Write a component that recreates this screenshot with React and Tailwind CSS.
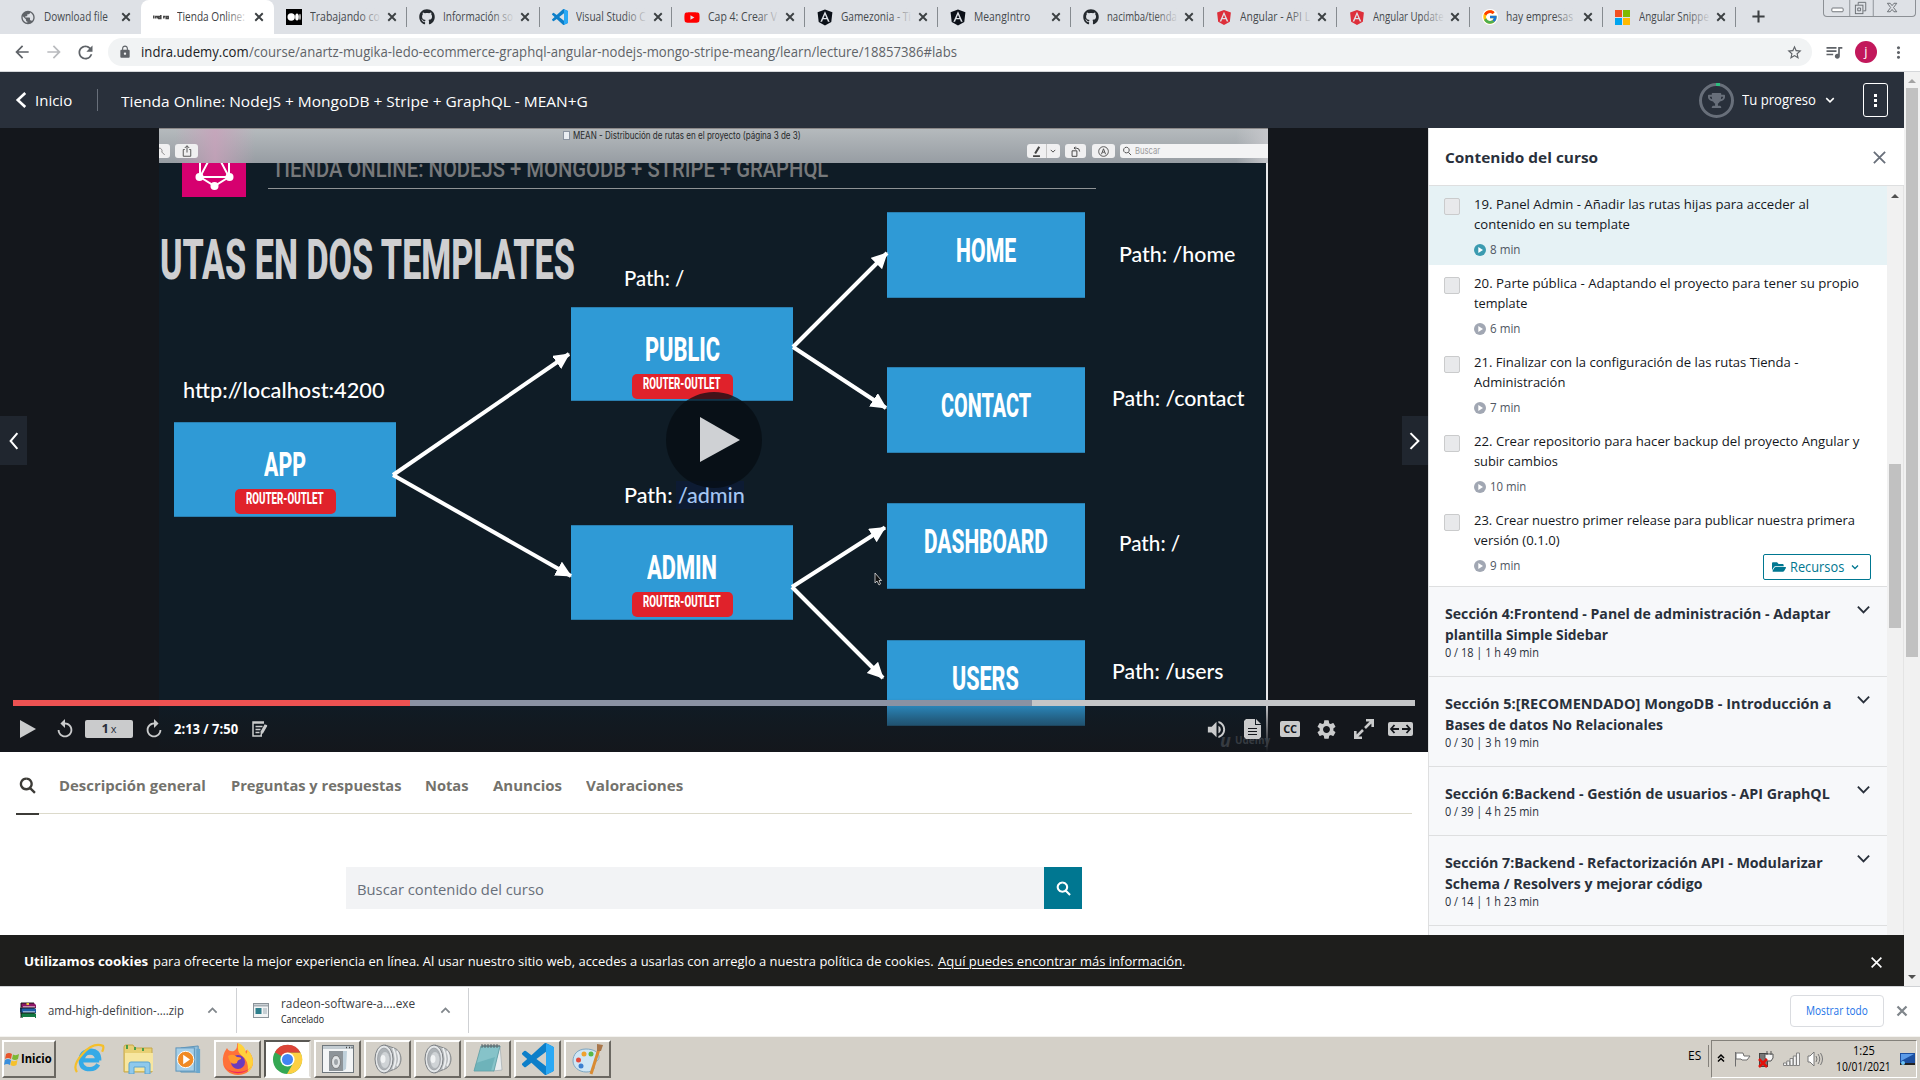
import React, { useLayoutEffect, useRef, useState } from "react";
import { FaGithub, FaYoutube, FaAngular, FaTrophy, FaFolderOpen } from "react-icons/fa";
import { FcGoogle } from "react-icons/fc";
import {
  MdArrowBack, MdArrowForward, MdRefresh, MdLock, MdStarBorder, MdQueueMusic, MdMoreVert,
  MdReplay, MdVolumeUp, MdSettings, MdPublic,
} from "react-icons/md";

/* Single line of text squeezed or stretched to a given width. */
function Fit({ w, children, className = "", inner = "" }) {
  const ref = useRef(null);
  const [s, setS] = useState(1);
  useLayoutEffect(() => {
    const n = ref.current.offsetWidth;
    if (n) setS(w / n);
  }, [w]);
  return (
    <span className={"inline-block whitespace-nowrap shrink-0 " + className} style={{ width: w }}>
      <span ref={ref} className={"inline-block origin-left " + inner} style={{ transform: `scaleX(${s})` }}>
        {children}
      </span>
    </span>
  );
}

const Chevron = ({ className = "", d = "M2 5l6 6 6-6", sw = 2 }) => (
  <svg viewBox="0 0 16 16" className={"shrink-0 " + className} fill="none" stroke="currentColor" strokeWidth={sw}>
    <path d={d} />
  </svg>
);
const Cross = ({ className = "", sw = 2 }) => <Chevron className={className} sw={sw} d="M2 2l12 12M14 2L2 14" />;

const VsCode = ({ className }) => (
  <svg viewBox="0 0 24 24" className={className} fill="#0d7fc9">
    <path d="M23.15 2.587L18.21.21a1.494 1.494 0 0 0-1.705.29l-9.46 8.63-4.12-3.128a.999.999 0 0 0-1.276.057L.327 7.261A1 1 0 0 0 .326 8.74L3.899 12 .326 15.26a1 1 0 0 0 .001 1.479L1.65 17.94a.999.999 0 0 0 1.276.057l4.12-3.128 9.46 8.63a1.492 1.492 0 0 0 1.704.29l4.942-2.377A1.5 1.5 0 0 0 24 20.06V3.939a1.5 1.5 0 0 0-.85-1.352zm-5.146 14.861L10.826 12l7.178-5.448v10.896z" />
    <path fill="#2ba9f5" d="M18 .2l5.150 2.387q.85.5.85 1.352v16.121q0 .9-.85 1.352L18 23.800z" />
  </svg>
);
const Medium = () => (
  <svg viewBox="0 0 16 16" className="size-4">
    <rect width="16" height="16" fill="#000" />
    <circle cx="5.2" cy="8" r="3.7" fill="#fff" />
    <ellipse cx="11" cy="8" rx="1.8" ry="3.5" fill="#fff" />
    <ellipse cx="14" cy="8" rx=".7" ry="3.2" fill="#fff" />
  </svg>
);
const Microsoft = () => (
  <div className="grid grid-cols-2 gap-px size-[15px]">
    <i className="bg-[#f25022]" /><i className="bg-[#7fba00]" /><i className="bg-[#00a4ef]" /><i className="bg-[#ffb900]" />
  </div>
);
const Indra = () => (
  <svg viewBox="0 0 16 16" className="size-4" fill="none" stroke="#444" strokeWidth="1.500">
    <path d="M.8 6.500v3M2.800 9.500v-2h2v2M7.800 7v2.500h-2v-2h2M10.800 9.500v-2h1.400M13.200 7.500h2v2h-2zM7.800 6v1.500" />
  </svg>
);
const Black = () => <FaAngular className="size-[19px] text-[#0b1018]" />;
const Red = () => <FaAngular className="size-[17px] text-[#dd2f3a]" />;

const TABS = [
  ["Download file", 64, <MdPublic className="size-[17px] text-[#5f6368]" />],
  ["Tienda Online:", 68, <Indra />],
  ["Trabajando co", 70, <Medium />],
  ["Información so", 70, <FaGithub className="size-4 text-[#24292e]" />],
  ["Visual Studio C", 70, <VsCode className="size-4" />],
  ["Cap 4: Crear V", 69, <FaYoutube className="size-[17px] text-[#ff0000]" />],
  ["Gamezonia - Ti", 70, <Black />],
  ["MeangIntro", 56, <Black />],
  ["nacimba/tienda", 70, <FaGithub className="size-4 text-[#24292e]" />],
  ["Angular - API L", 70, <Red />],
  ["Angular Update", 71, <Red />],
  ["hay empresas", 67, <FcGoogle className="size-4 rounded-full bg-white" />],
  ["Angular Snippe", 70, <Microsoft />],
];

function TabStrip() {
  return (
    <div className="flex h-[34px] shrink-0 bg-[#dee1e6] pl-[8px]">
      {TABS.map(([t, w, icon], i) => (
        <div
          key={t}
          className={
            "flex items-center h-[34px] w-[132.9px] shrink-0 pl-[12px] text-[12px] relative " +
            (i === 1 ? "bg-white rounded-t-lg text-[#3c4043]" : "text-[#45494d]")
          }
        >
          <span className="w-4 flex justify-center">{icon}</span>
          <span className="relative ml-2 w-[72px] flex overflow-hidden">
            <Fit w={w}>{t}</Fit>
            {w > 66 && (
              <span className={"absolute right-0 top-0 h-full w-6 bg-gradient-to-r from-transparent " + (i === 1 ? "to-white" : "to-[#dee1e6]")} />
            )}
          </span>
          <Cross className="size-[10px] ml-[5px] text-[#3c4043]" sw={3} />
          {i > 1 && <span className="absolute right-0 top-[7px] h-5 w-px bg-[#868b90]" />}
        </div>
      ))}
      <Chevron className="size-[15px] ml-[15px] mt-[9px] text-[#3c4043]" d="M8 1.500v13M1.500 8h13" sw={2.2} />
      <div className="ml-auto mr-[4px] flex h-[17px] w-[93px] rounded-b border border-t-0 border-[#8c9095] text-[#6a6e73]">
        <svg viewBox="0 0 93 17" className="w-full" fill="none" stroke="currentColor">
          <path d="M25.500 0v17M50.500 0v17" stroke="#8c9095" />
          <rect x="6.500" y="8.500" width="12" height="4" rx="1" fill="#fff" />
          <rect x="31.500" y="5.500" width="8" height="9" /><path d="M34.500 5V2.500h8v9H40M34 8.500h3v3h-3z" />
          <path d="M65.500 3.500h3l2 2.500 2-2.500h3L72 8l3.500 4.500h-3l-2-2.500-2 2.500h-3L69 8z" />
        </svg>
      </div>
    </div>
  );
}

function AddressBar() {
  return (
    <div className="flex items-center h-[38px] shrink-0 bg-white border-b border-[#d5d7da] text-[#5f6368] pb-px">
      <MdArrowBack className="size-5 ml-3" />
      <MdArrowForward className="size-5 ml-3 text-[#b9bbbe]" />
      <MdRefresh className="size-[21px] ml-[11px]" />
      <div className="ml-[12px] w-[1704px] h-7 rounded-full bg-[#f1f3f4] flex items-center pl-[10px] text-[14px]">
        <MdLock className="size-[14px] -mt-px" />
        <Fit w={108} className="ml-[9px] text-[#202124] leading-5">indra.udemy.com</Fit>
        <Fit w={708} className="leading-5">/course/anartz-mugika-ledo-ecommerce-graphql-angular-nodejs-mongo-stripe-meang/learn/lecture/18857386#labs</Fit>
        <MdStarBorder className="size-[17px] ml-auto mr-[9px]" />
      </div>
      <MdQueueMusic className="size-[20px] ml-[12px]" />
      <span className="ml-[11px] size-[22px] rounded-full bg-[#c2185b] text-white text-[13px] leading-[20px] text-center">j</span>
      <MdMoreVert className="size-[19px] ml-[12px]" />
    </div>
  );
}

function CourseHeader() {
  return (
    <div className="flex items-center h-14 shrink-0 bg-[#29303b] text-white">
      <Chevron className="h-[18px] w-[15px] ml-[14px]" d="M12 0.500L4 8l8 7.500" sw={2.8} />
      <Fit w={37} className="ml-[6px] text-[15px] leading-5">Inicio</Fit>
      <span className="ml-[25px] w-px h-[22px] bg-[#686f7a]" />
      <Fit w={467} className="ml-[23px] text-[15px] leading-5 mt-[2px]">Tienda Online: NodeJS + MongoDB + Stripe + GraphQL - MEAN+G</Fit>
      <div className="ml-auto size-[35px] rounded-full border-[3px] border-[#686f7a] flex items-center justify-center relative">
        <span className="absolute -top-[3px] left-[14px] w-[4px] h-[3px] bg-[#2dbd7e]" />
        <FaTrophy className="size-[17px] text-[#686f7a]" />
      </div>
      <Fit w={74} className="ml-[8px] text-[14px] leading-5">Tu progreso</Fit>
      <Chevron className="size-[10px] ml-[9px]" sw={2.4} />
      <div className="ml-[28px] mr-[16px] h-[34px] w-[25px] rounded-[3px] border border-white flex flex-col items-center justify-center gap-[2px]">
        <i className="size-[3px] bg-white" /><i className="size-[3px] bg-white" /><i className="size-[3px] bg-white" />
      </div>
    </div>
  );
}

const NODES = [
  ["APP", 42, "left-[174px] top-[294px] w-[222px] h-[95px] pt-[24px]", true],
  ["PUBLIC", 75, "left-[571px] top-[179px] w-[222px] h-[94px] pt-[24px]", true],
  ["ADMIN", 70, "left-[571px] top-[397px] w-[222px] h-[94.500px] pt-[24px]", true],
  ["HOME", 60, "left-[886.500px] top-[83.500px] w-[198.500px] h-[86px] pt-[20px]", false],
  ["CONTACT", 90, "left-[886.500px] top-[239px] w-[198.500px] h-[86px] pt-[20px]", false],
  ["DASHBOARD", 124, "left-[886.500px] top-[375px] w-[198.500px] h-[86px] pt-[20px]", false],
  ["USERS", 67, "left-[886.500px] top-[511.500px] w-[198.500px] h-[86px] pt-[20px]", false],
];
const PATHS = [
  ["http://localhost:4200", 202, "left-[183px] top-[251px]"],
  ["Path: /", 60, "left-[624px] top-[139px]"],
  ["Path: /home", 116, "left-[1119px] top-[115px]"],
  ["Path: /contact", 132, "left-[1112px] top-[259px]"],
  ["Path: /", 61, "left-[1119px] top-[404px]"],
  ["Path: /users", 111, "left-[1112px] top-[532px]"],
];
const ARROWS = [
  [393, 475, 569, 354], [393, 475, 571, 576], [793, 347, 887, 253],
  [793, 347, 886, 408], [792, 587, 885, 527.5], [792, 587, 883, 678],
];

function Slide() {
  return (
    <div className="absolute inset-0">
      <div className="absolute left-[159px] top-0 w-[1109px] h-[624px] bg-[#0f1c26] border-r-2 border-[#e8e8ea]" />
      <svg viewBox="182 163 64 34" className="absolute left-[182px] top-[35px] w-16 h-[34px]" fill="none" stroke="#fff" strokeWidth="2">
        <rect x="182" y="163" width="64" height="34" fill="#d6006f" stroke="none" />
        <path d="M200 163v14l14.500 9 14.500-9v-14M209 160l-9 17M220 160l9 17M200 177h29" />
        <g fill="#fff" stroke="none"><circle cx="199.500" cy="177" r="4" /><circle cx="229.500" cy="177" r="4" /><circle cx="214.500" cy="186" r="4" /></g>
      </svg>
      <div className="absolute left-[272px] top-[29px] text-[24px] leading-none text-[#77797b] font-['Roboto'] font-medium">
        <Fit w={556}>TIENDA ONLINE: NODEJS + MONGODB + STRIPE + GRAPHQL</Fit>
      </div>
      <div className="absolute left-[268px] top-[60px] w-[828px] h-px bg-[#8f9395]" />
      <div className="absolute left-[159px] top-0 w-[1109px] h-[35px] bg-linear-to-b from-[#b5babd] to-[#979da3] border-t border-[#8b8888]">
        <div className="absolute left-[16px] top-0 h-full w-[80px] bg-linear-to-r from-transparent via-[#cba0bb]/75 to-transparent" />
        <div className="absolute right-0 top-0 h-full w-8 bg-linear-to-r from-transparent to-[#c5c6ca]" />
        <div className="absolute left-0 top-[15px] w-[11px] h-[14px] bg-[#f0f0f1] rounded-r-[3px] text-[#777]"><Chevron className="size-[9px] mt-[3px]" d="M0 2a5 5 0 0 1 5 7l5 5" sw={1.5} /></div>
        <div className="absolute left-[16px] top-[15px] w-[23px] h-[14px] bg-[#f0f0f1] rounded-[3px] flex items-center justify-center text-[#555]">
          <Chevron className="size-[12px]" d="M5 6H3v9h10V6h-2M8 10V1M5 4l3-3 3 3" sw={1.300} />
        </div>
        <div className="absolute left-[404px] top-0 flex items-center font-['Inter'] text-[10px] leading-[13px] text-[#26282a]">
          <span className="w-[7px] h-[9px] bg-[#e9edf2] border border-[#8a93a0] mr-[3px]" />
          <Fit w={228}>MEAN - Distribución de rutas en el proyecto (página 3 de 3)</Fit>
        </div>
        <div className="absolute right-0 top-[15px] h-[14px] flex text-[#444] text-[9px]">
          <div className="w-[33px] bg-[#f0f0f1] rounded-[3px] flex items-center">
            <Chevron className="size-[11px] ml-[4px]" d="M12 1L6 11M3 15h10" sw={3} />
            <span className="ml-[4px] h-full w-px bg-[#c5c5c5]" /><Chevron className="size-[6px] ml-[3px]" sw={2.500} />
          </div>
          <div className="ml-[5px] w-[21px] bg-[#f0f0f1] rounded-[3px] flex items-center justify-center"><Chevron className="size-[11px]" d="M3 7h7v8H3zM6 3h3a5 5 0 0 1 5 5M8 1L6 3l2 2" sw={1.400} /></div>
          <div className="ml-[6px] w-[23px] bg-[#f0f0f1] rounded-[3px] flex items-center justify-center"><Chevron className="size-[11px]" d="M8 1a7 7 0 1 0 .1 0M5 12l3-8 3 8M6.500 9h3" sw={1.300} /></div>
          <div className="ml-[5px] w-[148px] bg-[#f3f3f4] rounded-l-[3px] flex items-center pl-[2px] font-['Inter'] text-[9.500px] text-[#9a9a9c]">
            <Chevron className="size-[10px] text-[#555] mr-[3px]" d="M7 2a4.500 4.500 0 1 0 .1 0M10 10l4.500 4.500" sw={1.600} />
            <Fit w={25}>Buscar</Fit>
          </div>
        </div>
      </div>
      <div className="absolute left-[160px] top-[105px] font-['Roboto'] font-extrabold text-[55px] leading-none text-[#cfcfd1]">
        <Fit w={415}>UTAS EN DOS TEMPLATES</Fit>
      </div>
      {NODES.map(([t, w, pos, outlet]) => (
        <div key={t} className={"absolute bg-[#2f9ad6] border-y border-[#2a7fb0] flex flex-col items-center font-['Roboto'] font-extrabold text-white text-[34px] leading-[34px] " + pos}>
          <Fit w={w}>{t}</Fit>
          {outlet && (
            <div className="mt-[8px] w-[101px] h-[25px] rounded-[5px] bg-[#e0222b] text-center text-[16px] leading-4 pt-[2px]">
              <Fit w={78}>ROUTER-OUTLET</Fit>
            </div>
          )}
        </div>
      ))}
      {PATHS.map(([t, w, pos]) => (
        <div key={pos} className={"absolute font-['Lato'] font-medium text-[21px] leading-none text-white " + pos}><Fit w={w}>{t}</Fit></div>
      ))}
      <div className="absolute left-[676px] top-[353px] w-[68px] h-[28px] bg-[#0d1b33]" />
      <div className="absolute left-[624px] top-[356px] font-['Lato'] font-medium text-[21px] leading-none text-white">
        <Fit w={121}>Path: <span className="text-[#a4c6f2]">/admin</span></Fit>
      </div>
      <svg viewBox="0 128 1429 624" className="absolute inset-0 w-[1429px] h-[624px]">
        <defs>
          <marker id="head" markerWidth="18" markerHeight="18" refX="15" refY="8" orient="auto" markerUnits="userSpaceOnUse">
            <path d="M0 0l16 8-16 8z" fill="#fff" />
          </marker>
        </defs>
        {ARROWS.map((a, i) => (
          <line key={i} x1={a[0]} y1={a[1]} x2={a[2]} y2={a[3]} stroke="#fff" strokeWidth="4" markerEnd="url(#head)" />
        ))}
        <path d="M875 573v10l2-2 2 4 1.500-1-1.500-3.500h2.500z" fill="#111" stroke="#ddd" strokeWidth=".8" />
        <circle cx="714" cy="440" r="48" fill="#060d12" fillOpacity=".72" />
        <path d="M700 417l40 23-40 22z" fill="#cfd1d4" />
      </svg>
    </div>
  );
}

function Controls() {
  return (
    <div className="absolute inset-x-0 bottom-0 h-[70px]">
      <div className="absolute inset-x-0 bottom-0 h-[54px] bg-linear-to-b from-transparent via-[#14171c]/45 via-40% to-[#14171c]" />
      <div className="absolute left-[1220px] bottom-[6px] flex items-center gap-[4px] text-[#363b41] font-bold text-[10px] leading-3"><i className="text-[18px]">u</i>Udemy</div>
      <div className="relative mx-[13px] pt-[18px] flex h-[24px]">
        <i className="w-[397px] bg-[#ec5252]" /><i className="w-[622px] bg-[#8a92a3]" /><i className="flex-1 bg-[#c4c5c7]" />
      </div>
      <div className="relative flex items-center h-[46px] text-[#cacbcc]">
        <svg viewBox="0 0 16 18" className="w-4 h-[18px] ml-5" fill="currentColor"><path d="M0 0l16 9-16 9z" /></svg>
        <MdReplay className="size-[22px] ml-[18px]" />
        <div className="ml-[9px] w-12 h-[18px] rounded-[2px] bg-[#cacbcc] text-[#29303b] text-center text-[13px] leading-[17px]"><b>1</b><span className="text-[11px] ml-[2px]">x</span></div>
        <MdReplay className="size-[22px] ml-[10px] -scale-x-100" />
        <Fit w={64} className="ml-[9px] text-[14px] font-bold text-white leading-5">2:13 / 7:50</Fit>
        <svg viewBox="0 0 16 16" className="size-[16px] ml-[14px]" fill="none" stroke="currentColor" strokeWidth="1.500">
          <path d="M12 1H1v14h9M1 2h11M3.500 5.500h7M3.500 8.500h5M3.500 11.500h4M14.500 4l-5 8-.5 3" /><path d="M14 4l-4.500 8" strokeWidth="3" />
        </svg>
        <MdVolumeUp className="size-[23px] ml-auto" />
        <svg viewBox="0 0 17 20" className="w-[17px] h-5 ml-[16px]"><path d="M2 0h9v6h6v12l-2 2H2l-2-2V2zM12 0l5 5h-5z" fill="currentColor" /><path d="M4 9.500h9M4 12.500h9M4 15.500h9" stroke="#14171c" /></svg>
        <div className="ml-[19px] w-5 h-4 rounded-[2px] bg-current"><span className="block text-center text-[11px] leading-4 font-bold text-[#14171c] tracking-tight">CC</span></div>
        <MdSettings className="size-[23px] ml-[15px]" />
        <svg viewBox="0 0 20 20" className="size-5 ml-[16px]" fill="none" stroke="currentColor" strokeWidth="2.600"><path d="M11 9l7-7M12 1.300h6.700V8M9 11l-7 7M8 18.700H1.300V12" /></svg>
        <svg viewBox="0 0 25 14" className="w-[25px] h-[14px] ml-[14px] mr-[15px]"><rect width="25" height="14" rx="2" fill="currentColor" /><path d="M11 7H3M6.500 3L3 7l3.500 4M14 7h8M18.500 3L22 7l-3.500 4" fill="none" stroke="#14171c" strokeWidth="1.800" /></svg>
      </div>
    </div>
  );
}

const LECTURES = [
  [["19. Panel Admin - Añadir las rutas hijas para acceder al", 335], ["contenido en su template", 156], "8 min", 30],
  [["20. Parte pública - Adaptando el proyecto para tener su propio", 385], ["template", 53], "6 min", 30],
  [["21. Finalizar con la configuración de las rutas Tienda -", 325], ["Administración", 91], "7 min", 30],
  [["22. Crear repositorio para hacer backup del proyecto Angular y", 385], ["subir cambios", 84], "10 min", 36],
  [["23. Crear nuestro primer release para publicar nuestra primera", 381], ["versión (0.1.0)", 86], "9 min", 30],
];
const SECTIONS = [
  [[["Sección 4:Frontend - Panel de administración - Adaptar", 385], ["plantilla Simple Sidebar", 163]], "0 / 18 | 1 h 49 min"],
  [[["Sección 5:[RECOMENDADO] MongoDB - Introducción a", 387], ["Bases de datos No Relacionales", 218]], "0 / 30 | 3 h 19 min"],
  [[["Sección 6:Backend - Gestión de usuarios - API GraphQL", 385]], "0 / 39 | 4 h 25 min"],
  [[["Sección 7:Backend - Refactorización API - Modularizar", 378], ["Schema / Resolvers y mejorar código", 257]], "0 / 14 | 1 h 23 min"],
  [[], ""],
];

function Sidebar() {
  return (
    <div className="w-[476px] shrink-0 flex flex-col border-l border-[#dedfe0] bg-white">
      <div className="h-[58px] shrink-0 flex items-center border-b border-[#dedfe0] pl-[16px] pr-[17px] pt-[2px] text-[#29303b]">
        <Fit w={153} className="text-[15px] font-bold">Contenido del curso</Fit>
        <Cross className="size-[15px] ml-auto text-[#686f7a]" sw={1.900} />
      </div>
      <div className="flex flex-1 min-h-0">
        <div className="w-[458px] flex flex-col overflow-hidden">
          {LECTURES.map(([a, b, m, mw], i) => (
            <div key={i} className={"h-[79px] shrink-0 flex pl-[15px] pt-[8px] relative " + (i === 0 ? "bg-[#e6f2f5]" : "bg-white")}>
              <span className="mt-[4px] w-4 h-[17px] rounded-[2px] border border-[#cacbcc] bg-[#e8e9eb]" />
              <div className="ml-[14px] flex flex-col text-[13px] leading-5 text-[#14171c]">
                <Fit w={a[1]}>{a[0]}</Fit>
                <Fit w={b[1]}>{b[0]}</Fit>
                <div className="flex items-center mt-[6px] h-5 text-[12px] text-[#505763]">
                  <svg viewBox="0 0 12 12" className="size-3 mr-1"><circle cx="6" cy="6" r="6" fill={i === 0 ? "#3b9bb0" : "#a1a7b3"} /><path d="M4.300 3l4.700 3-4.700 3z" fill="#fff" /></svg>
                  <Fit w={mw}>{m}</Fit>
                </div>
              </div>
              {i === 4 && (
                <div className="absolute right-[16px] top-[52px] w-[108px] h-[26px] rounded-[2px] border border-[#007791] bg-white flex items-center pl-[8px] text-[#007791]">
                  <FaFolderOpen className="size-[14px]" />
                  <Fit w={54} className="ml-[4px] text-[14px] leading-5">Recursos</Fit>
                  <Chevron className="size-[8px] ml-[7px]" sw={2.600} />
                </div>
              )}
            </div>
          ))}
          <div className="h-[5px] shrink-0" />
          {SECTIONS.map(([ls, m], i) => (
            <div key={i} className={"shrink-0 flex border-t border-[#dedfe0] bg-[#f7f8fa] pl-[16px] pt-[16px] pr-[16px] text-[#29303b] " + (ls.length === 1 ? "h-[69px]" : "h-[90px]")}>
              <div className="flex flex-col text-[15px] font-bold leading-[21px]">
                {ls.map(([t, w]) => <Fit key={t} w={w}>{t}</Fit>)}
                {m && <Fit w={94} className="text-[12px] leading-[16px] font-normal">{m}</Fit>}
              </div>
              {m && <Chevron className="size-[15px] ml-auto -mt-[1px]" sw={2} />}
            </div>
          ))}
        </div>
        <div className="flex-1 bg-[#f1f1f1] flex flex-col items-center border-r border-[#e4e4e4]">
          <svg viewBox="0 0 8 4" className="w-2 h-1 mt-[8px]"><path d="M4 0l4 4H0z" fill="#505050" /></svg>
          <div className="mt-[266px] w-[12px] h-[164px] bg-[#c1c1c1]" />
        </div>
      </div>
    </div>
  );
}

const NAV = [["Descripción general", 147, ""], ["Preguntas y respuestas", 170, "ml-[25px]"], ["Notas", 44, "ml-[24px]"], ["Anuncios", 69, "ml-[24px]"], ["Valoraciones", 97, "ml-[24px]"]];
const SearchIcon = ({ className }) => <Chevron className={className} d="M6.800 1.500a5 5 0 1 0 .1 0M10.500 10.500l4.500 4.500" sw={2.200} />;

function Main() {
  return (
    <div className="w-[1428px] shrink-0 flex flex-col">
      <div className="h-[624px] shrink-0 relative overflow-hidden bg-[#14171c]">
        <Slide />
        <Controls />
        <div className="absolute left-0 top-[288px] w-[27px] h-[49px] bg-[#20262f] text-white flex items-center justify-center"><Chevron className="size-[18px]" d="M11 1L5 8l6 7" sw={1.800} /></div>
        <div className="absolute right-0 top-[288px] w-[26px] h-[49px] bg-[#20262f] text-white flex items-center justify-center"><Chevron className="size-[18px]" d="M4 1l7 7-7 7" sw={1.800} /></div>
      </div>
      <div className="ml-4 mr-[16px] h-[62px] shrink-0 flex border-b border-[#dcdacb]">
        <div className="w-[23px] h-[63px] border-b-2 border-[#3c3b37] pt-[25px] pl-[3px] text-[#3c3b37]"><SearchIcon className="size-[17px]" /></div>
        <div className="flex items-center h-[66px] ml-5 text-[15px] font-bold text-[#73726c]">
          {NAV.map(([t, w, c]) => <Fit key={t} w={w} className={c}>{t}</Fit>)}
        </div>
      </div>
      <div className="ml-[346px] mt-[53px] flex h-[42px]">
        <div className="w-[698px] bg-[#f2f3f5] flex items-center pl-[11px] pt-[3px] text-[15px] text-[#686f7a]"><Fit w={187}>Buscar contenido del curso</Fit></div>
        <div className="w-[38px] bg-[#007791] text-white flex items-center justify-center"><SearchIcon className="size-[15px]" /></div>
      </div>
    </div>
  );
}

function CookieBar() {
  return (
    <div className="h-[51px] shrink-0 bg-[#1e1e1c] flex items-center pl-6 pr-[21px] text-white text-[13px] leading-5">
      <Fit w={124} className="font-bold">Utilizamos cookies</Fit>
      <Fit w={781} className="ml-[5px]">para ofrecerte la mejor experiencia en línea. Al usar nuestro sitio web, accedes a usarlas con arreglo a nuestra política de cookies.</Fit>
      <Fit w={244} className="ml-[4px]" inner="underline underline-offset-2">Aquí puedes encontrar más información</Fit>.
      <Cross className="size-[13px] ml-auto mt-[3px]" sw={2} />
    </div>
  );
}

function Downloads() {
  const up = "M2 11l6-6 6 6";
  return (
    <div className="h-[50px] shrink-0 bg-white border-t border-[#d0d2d5] flex items-center pb-[2px] text-[13px] text-[#3c4043]">
      <svg viewBox="0 0 17 17" className="size-[17px] ml-[20px]">
        <path d="M1 1h13l2 2v3H3L1 5z" fill="#8d1766" /><path d="M0 6h14l2 1v4H2l-2-1z" fill="#1d5fa8" /><path d="M1 11h13l2 1v4H3l-2-1z" fill="#137a42" />
        <path d="M3 5h12M3 10h12M3 15.500h12" stroke="#fff" strokeWidth="1" /><path d="M1 1v15M.5 6h15M.5 11h15M1 1h13" stroke="#111" strokeWidth=".9" /><path d="M6.500 1h2.500v2H6.500z" fill="#e8c53a" />
      </svg>
      <Fit w={136} className="ml-[11px]">amd-high-definition-....zip</Fit>
      <Chevron className="size-[11px] ml-[23px] text-[#80868b]" d={up} sw={2.600} />
      <span className="w-px h-[45px] bg-[#cfd1d4] ml-[18px]" />
      <svg viewBox="0 0 16 15" className="w-4 h-[15px] ml-[16px]"><rect x=".5" y=".5" width="15" height="14" fill="#f2f4f5" stroke="#8b9399" /><path d="M1 2.500h14" stroke="#a7afb5" strokeWidth="2" /><rect x="2.500" y="5" width="6" height="6" fill="#2e7f8c" /><path d="M10 6h4M10 8h4M10 10h4" stroke="#9cabb4" /></svg>
      <div className="flex flex-col ml-[12px]">
        <Fit w={134} className="leading-[17px]">radeon-software-a....exe</Fit>
        <Fit w={43} className="text-[10.500px] leading-[15px] text-[#202124]">Cancelado</Fit>
      </div>
      <Chevron className="size-[11px] ml-[25px] text-[#80868b]" d={up} sw={2.600} />
      <span className="w-px h-[45px] bg-[#cfd1d4] ml-[17px]" />
      <div className="ml-auto w-[94px] h-8 rounded border border-[#dadce0] flex items-center justify-center text-[12px] text-[#1a73e8]"><Fit w={62}>Mostrar todo</Fit></div>
      <Cross className="size-[12px] ml-[12px] mr-[12px] text-[#80868b]" sw={3} />
    </div>
  );
}

const Speaker = () => (
  <svg viewBox="0 0 32 32" className="size-8">
    <path d="M13 2l9 3c4 1 7 6 7 11s-3 9-6 10l-10 4z" fill="#b9bdbf" stroke="#75797c" strokeWidth=".8" /><path d="M21 5q5 11 0 21M25 8q4 8 0 15" stroke="#eceeef" strokeWidth="1.800" fill="none" />
    <ellipse cx="12" cy="16" rx="9" ry="14" fill="#e3e6e8" stroke="#7b7f83" /><ellipse cx="12" cy="16" rx="6.500" ry="11" fill="#aeb3b7" stroke="#8d9195" strokeWidth=".6" /><ellipse cx="13" cy="17" rx="4.500" ry="8" fill="#cfd3d6" /><ellipse cx="11" cy="16" rx="2.500" ry="4" fill="#f1f3f4" />
  </svg>
);
const TASKS = [
  <svg viewBox="0 0 32 32" className="size-8">
    <path d="M25 7q-3 1-2 4-2-7-8-11 1 5-3 8Q7 9 5 5 0 12 1 19a15 13 0 0 0 30 0q0-7-6-12z" fill="#ff7139" /><path d="M16 0q8 3 8 11 2-2 1-5 6 6 6 13 0 6-5 10 1-12-7-17-4-3-3-12z" fill="#ffd23c" /><path d="M2 22a14.500 11 0 0 0 28 0Q27 29 16 29T2 22z" fill="#ec2165" /><circle cx="16" cy="19" r="7" fill="#6c3bbd" /><path d="M6 13q5-3 9 1 5 0 4 2-4 1-4 4-7 3-9-7z" fill="#ff9a2e" />
  </svg>,
  <svg viewBox="0 0 32 32" className="size-[31px]">
    <circle cx="16" cy="16" r="15" fill="#34a853" /><path d="M16 16L3 8.500a15 15 0 0 1 26.500 .5H16z" fill="#dc4437" /><path d="M29.500 9A15 15 0 0 1 15.500 31L22 19.500 16 9z" fill="#fdd043" /><circle cx="16" cy="16" r="7.300" fill="#fff" /><circle cx="16" cy="16" r="5.700" fill="#4285f4" />
  </svg>,
  <svg viewBox="0 0 32 28" className="w-8 h-7"><rect x=".5" y=".5" width="31" height="27" fill="#f3f5f6" stroke="#6f777d" /><path d="M1 2.500h30" stroke="#c3ccd2" strokeWidth="3" /><path d="M24 2.500h1M27 2.500h1M29.500 2.500h1" stroke="#444" strokeWidth="1.500" /><rect x="7" y="6" width="14" height="20" fill="#8d9499" /><ellipse cx="14" cy="17" rx="4.500" ry="6.500" fill="#dfe3e5" stroke="#666" strokeWidth=".7" /><ellipse cx="14" cy="17" rx="2" ry="3" fill="#9fa5a9" /><path d="M21 6h4l-1 18-3 2z" fill="#bfd0da" /></svg>,
  <Speaker />, <Speaker />,
  <svg viewBox="0 0 32 32" className="size-8"><path d="M21 28l7-25 2 24z" fill="#e8edef" stroke="#9aa5aa" strokeWidth=".6" /><path d="M9 3h19l-6 25H2z" fill="#86c3c9" stroke="#5c9aa1" strokeWidth=".8" /><path d="M4 20l19-6-4 14H2z" fill="#5fa9b1" opacity=".6" /><path d="M10 3h18M10 1v4M13 1v4M16 1v4M19 1v4M22 1v4M25 1v4" stroke="#5a6468" /></svg>,
  <VsCode className="size-[32px]" />,
  <svg viewBox="0 0 32 32" className="size-8"><path d="M14 6C5 6 1 12 1 18s6 11 13 11 9-3 8-7 5-3 5-8-6-8-13-8z" fill="#cfe6f5" stroke="#7da6c2" /><circle cx="12" cy="11" r="2.500" fill="#f0a22e" /><circle cx="19" cy="11" r="2.500" fill="#58b947" /><circle cx="6.500" cy="17" r="2.500" fill="#e34b3d" /><circle cx="9" cy="23" r="2.500" fill="#3c7fd0" /><path d="M27 6L19 31" stroke="#d98b33" strokeWidth="3" /><path d="M25 1l6 1-2 6h-4z" fill="#a9764a" /></svg>,
];

function Taskbar() {
  const raised = "border-2 border-t-white border-l-white border-b-[#6b6862] border-r-[#6b6862]";
  return (
    <div className="h-[44px] shrink-0 bg-[#d4d0c8] border-t border-[#f4f3f0] flex items-start pt-[3px] pl-[2px] text-black">
      <div className={"w-[54px] h-[38px] flex items-center " + raised}>
        <svg viewBox="0 0 16 16" className="size-4"><path d="M2 3q3-2 6 0L7 8Q4 6 1 8z" fill="#e8552b" /><path d="M9 3.500q3 1.500 6-.5l-1 5q-3 2-6 0z" fill="#7cb832" /><path d="M1 9q3-2 6 0l-1 5q-3-2-6 0z" fill="#3b8fdc" /><path d="M7.500 9.500q3 1.500 6-.5l-1 5q-3 2-6 0z" fill="#f6c12c" /></svg>
        <Fit w={31} className="ml-px text-[13px] font-bold">Inicio</Fit>
      </div>
      <svg viewBox="0 0 32 32" className="size-[31px] ml-[18px] mt-[3px]" fill="none"><path d="M26 18H9q0-8 7.500-8T24 18M25 22q-3 5-8.500 5Q7 27 7 18T16.500 8 26 18" stroke="#35aae6" strokeWidth="4.500" /><path d="M3 30Q-2 23 9 11T30 3q1 2-1 6" stroke="#f5bf2a" strokeWidth="2.300" /></svg>
      <svg viewBox="0 0 32 30" className="w-8 h-[30px] ml-[18px] mt-[4px]"><path d="M1 3q0-2 2-2h7l2 3h17v24H1z" fill="#e8cf74" stroke="#c7a849" /><path d="M4 1v4M12 3v3M20 4v3" stroke="#4a9e4a" strokeWidth="2" /><path d="M2 9h28v18H2z" fill="#f7e6a0" /><path d="M6 30V20q0-2 2-2h17q2 0 2 2v10h-5v-7H11v7z" fill="#8fc9ec" stroke="#5ba3d0" /></svg>
      <svg viewBox="0 0 30 30" className="size-[29px] ml-[20px] mt-[5px]"><path d="M6 3l18-2v27H6z" fill="#8fbfdd" stroke="#5c93b8" /><path d="M22 4h4v25h-4z" fill="#6ba7cd" /><rect x="1" y="3" width="19" height="24" fill="#a6cfe8" stroke="#5c93b8" /><circle cx="11" cy="15" r="8.500" fill="#f08a24" stroke="#fff" /><path d="M8.500 10l7 5-7 5z" fill="#fff" /></svg>
      <div className="flex gap-[3px] ml-[11px]">
        {TASKS.map((t, i) => (
          <div key={i} className={"w-[47px] h-[38px] -ml-px mr-px flex items-center justify-center " + (i === 1 ? "bg-white border-2 border-t-[#5a5854] border-l-[#5a5854] border-b-white border-r-[#e2dfd9]" : raised)}>{t}</div>
        ))}
      </div>
      <Fit w={13} className="ml-auto mt-[7px] text-[12px]">ES</Fit>
      <span className="ml-[7px] mt-[5px] w-px h-[22px] bg-[#84817b]" />
      <div className="ml-[2px] mr-[3px] w-[206px] h-[38px] border border-t-[#84817b] border-l-[#84817b] border-b-white border-r-white flex items-center">
        <Chevron className="w-[8px] h-[12px] ml-[5px] -mt-[3px]" d="M2 8l6-6 6 6M2 15l6-6 6 6" sw={3} />
        <svg viewBox="0 0 17 16" className="w-[17px] h-4 ml-[9px]" fill="#fff" stroke="#6e6e6e"><path d="M1.500 1v14.500M2 2h7l1 3h6l-3 4H8L7 8H2z" /></svg>
        <svg viewBox="0 0 16 17" className="w-4 h-[17px] ml-[7px]"><rect x="1.500" y="2.500" width="8" height="13" fill="#777" stroke="#444" /><path d="M7 3h8v4l-2 3h-4L7 7zM9 0v4M13 0v4" fill="#f4f4f4" stroke="#555" /><path d="M1 8l8 8M9 8l-8 8" stroke="#e3120b" strokeWidth="2.500" /></svg>
        <svg viewBox="0 0 17 14" className="w-[17px] h-[14px] ml-[9px]" fill="#f4f4f4" stroke="#7a7a7a" strokeWidth=".9"><path d="M.5 11h3v2.500h-3zM3.800 9h3v4.500h-3zM7 6.500h3v7H7zM10.300 4h3v9.500h-3zM13.500 1h3v12.500h-3z" /></svg>
        <svg viewBox="0 0 16 16" className="size-4 ml-[7px]" fill="none" stroke="#777"><path d="M1 5h2l4-4v14l-4-4H1z" fill="#fff" /><path d="M9 5q2 3 0 6M11 3q3.500 5 0 10M13.500 2q4 6 0 12" /></svg>
        <div className="ml-[13px] flex flex-col items-center text-[12px] leading-4"><Fit w={22}>1:25</Fit><Fit w={55}>10/01/2021</Fit></div>
        <svg viewBox="0 0 15 12" className="w-[15px] h-3 ml-[9px]"><rect width="15" height="12" fill="#1c4fa0" /><path d="M1 1h13L1 8z" fill="#5c9be8" /><rect y="10" width="15" height="2" fill="#222" /><circle cx="3" cy="10" r="2" fill="#6fc4f5" /></svg>
      </div>
    </div>
  );
}

export default function App() {
  return (
    <div className="w-[1920px] h-[1080px] flex flex-col overflow-hidden bg-white font-['Open_Sans','Noto_Sans',sans-serif]">
      <TabStrip />
      <AddressBar />
      <div className="flex h-[914px] shrink-0">
        <div className="w-[1904px] flex flex-col">
          <CourseHeader />
          <div className="flex h-[807px] shrink-0 overflow-hidden">
            <Main />
            <Sidebar />
          </div>
          <CookieBar />
        </div>
        <div className="w-4 bg-[#f1f1f1] flex flex-col items-center">
          <svg viewBox="0 0 8 4" className="w-2 h-1 mt-[7px]"><path d="M4 0l4 4H0z" fill="#a3a3a3" /></svg>
          <div className="mt-[5px] w-[12px] h-[569px] bg-[#c1c1c1]" />
          <svg viewBox="0 0 8 4" className="w-2 h-1 mt-auto mb-[7px]"><path d="M0 0h8L4 4z" fill="#505050" /></svg>
        </div>
      </div>
      <Downloads />
      <Taskbar />
    </div>
  );
}
